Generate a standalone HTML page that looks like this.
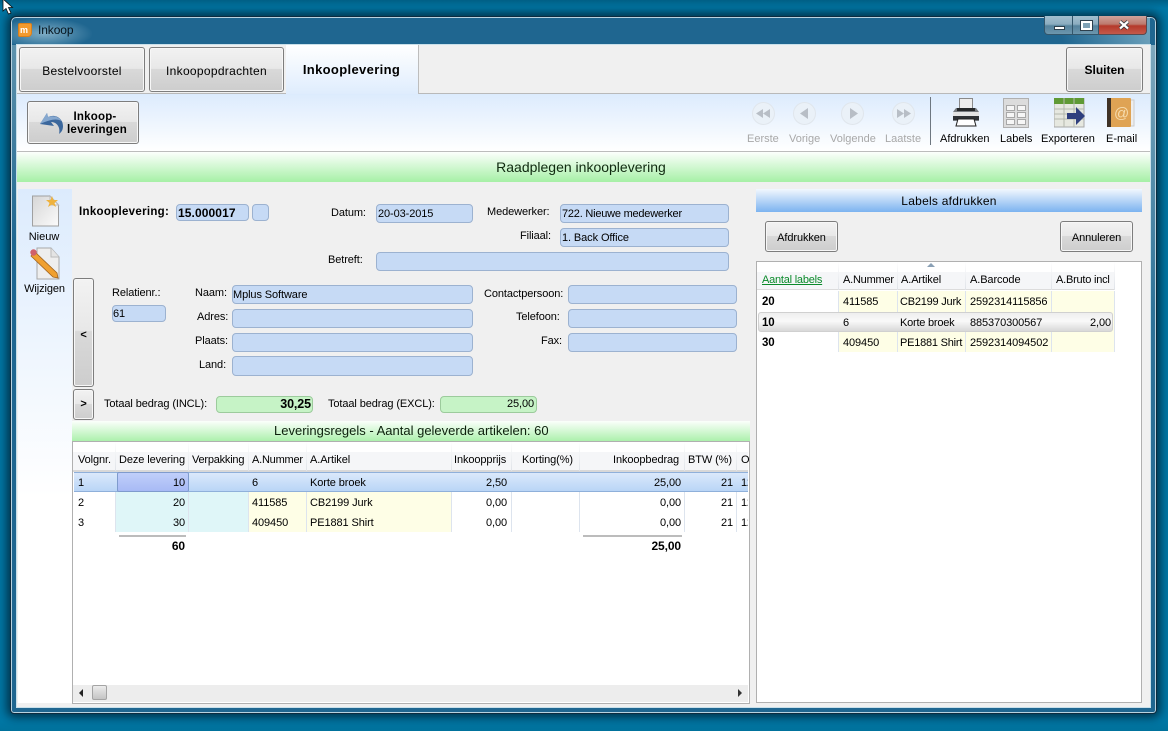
<!DOCTYPE html>
<html><head><meta charset="utf-8"><style>
html,body{margin:0;padding:0}
body{width:1168px;height:731px;overflow:hidden;position:relative;background:linear-gradient(#005f85 0,#0078a6 8px,#0078a6 720px,#00729c 731px);font-family:"Liberation Sans",sans-serif;font-size:11px;color:#000}
div,span,svg{position:absolute;box-sizing:border-box}
.t{white-space:nowrap;line-height:14px;height:14px;margin-top:1px;letter-spacing:-.1px}
.m0{margin-top:0}
.s{letter-spacing:-.22px}
.z{letter-spacing:0}
.r{text-align:right}.c{text-align:center}.b{font-weight:bold}
.btn{border:1px solid #7d7d7d;border-radius:3px;background:linear-gradient(#f2f2f2 0,#e8e8e8 48%,#d9d9d9 49%,#cdcdcd 100%);box-shadow:inset 0 0 0 1px #f7f7f7}
.f{background:#c6daf5;border:1px solid #9cb2d0;border-radius:4px}
.g{background:#c6f3c6;border:1px solid #9ccb9c;border-radius:4px}
.n{color:#a8a8a8}
.v{width:1px;background:#dde4ee}
.h{width:1px;background:linear-gradient(#fff,#dfe3e8)}
</style></head><body>
<!-- window -->
<div style="left:10px;top:16px;width:1147px;height:698px;background:#1f6690;border:1px solid #0c2c40;border-radius:6px 6px 4px 4px;box-shadow:0 0 10px 3px rgba(0,20,35,.75),inset 0 0 0 1px #b9d2df"></div>
<div style="left:12px;top:18px;width:80px;height:26px;background:radial-gradient(ellipse at 40% 60%,rgba(150,190,210,.8),rgba(31,102,144,0) 72%)"></div>
<div style="left:1000px;top:18px;width:150px;height:27px;background:linear-gradient(250deg,rgba(140,185,205,.75),rgba(31,102,144,0) 60%)"></div>
<div style="left:1150px;top:45px;width:5px;height:660px;background:linear-gradient(#7ea8bd,#2f7399 40%,#1f6690)"></div>
<div style="left:12px;top:45px;width:4px;height:660px;background:linear-gradient(#5f93ad,#1f6690 30%)"></div>
<div style="left:16px;top:44px;width:1135px;height:664px;border:1px solid #c9e0ea"></div>
<!-- title -->
<div style="left:18px;top:23px;width:14px;height:14px;background:#f29a2e;border-radius:2px 2px 4px 2px;border:1px solid #d9801c"></div>
<div class="t b m0" style="left:20px;top:23px;color:#fff;font-size:9px">m</div>
<div class="t m0" style="left:38px;top:23px;font-size:12px;color:#06141d">Inkoop</div>
<!-- caption buttons -->
<div style="left:1044px;top:16px;width:29px;height:19px;background:linear-gradient(#a2bfcf,#8cadc0 45%,#55829c 55%,#6d97ae);border:1px solid #33566b;border-top:0;border-radius:0 0 0 4px"></div>
<div style="left:1073px;top:16px;width:26px;height:19px;background:linear-gradient(#a2bfcf,#8cadc0 45%,#55829c 55%,#6d97ae);border:1px solid #33566b;border-top:0;border-left:0"></div>
<div style="left:1099px;top:16px;width:48px;height:19px;background:linear-gradient(#cfa49c,#bd7a6e 45%,#b53a2b 55%,#c45a4b);border:1px solid #5a4a4f;border-top:0;border-left:0;border-radius:0 0 4px 0"></div>
<div style="left:1054px;top:26px;width:11px;height:4px;background:#fff;border:1px solid #2d3f4c"></div>
<div style="left:1081px;top:21px;width:11px;height:9px;background:#7fa1b5;border:2px solid #fff;outline:1px solid #2d3f4c"></div>
<svg style="left:1118px;top:20px" width="12" height="10"><path d="M2 1.500L10 8.500M10 1.500L2 8.500" stroke="#28343c" stroke-width="3.800"/><path d="M2 1.500L10 8.500M10 1.500L2 8.500" stroke="#fff" stroke-width="2.200"/></svg>
<!-- client -->
<div style="left:17px;top:45px;width:1133px;height:662px;background:#f0f0f0"></div>
<!-- tabs -->
<div style="left:17px;top:93px;width:1133px;height:1px;background:#b9b9b9"></div>
<div style="left:19px;top:47px;width:126px;height:45px" class="btn"></div>
<div class="t c" style="left:19px;top:63px;width:126px;font-size:12px;letter-spacing:.3px">Bestelvoorstel</div>
<div style="left:149px;top:47px;width:135px;height:45px" class="btn"></div>
<div class="t c" style="left:149px;top:63px;width:135px;font-size:12px;letter-spacing:.3px">Inkoopopdrachten</div>
<div style="left:286px;top:45px;width:133px;height:50px;background:linear-gradient(#fff,#deecfd);border-right:1px solid #bdbdbd"></div>
<div class="t c b" style="left:285px;top:62px;width:133px;font-size:13px;letter-spacing:.35px">Inkooplevering</div>
<div style="left:1066px;top:47px;width:77px;height:45px" class="btn"></div>
<div class="t c b m0" style="left:1066px;top:63px;width:77px;font-size:12px;letter-spacing:0">Sluiten</div>
<!-- toolbar -->
<div style="left:17px;top:94px;width:1133px;height:57px;background:linear-gradient(#dcebfd,#fff)"></div>
<div style="left:17px;top:151px;width:1133px;height:1px;background:#bcbcbc"></div>
<div style="left:27px;top:101px;width:112px;height:43px" class="btn"></div>
<svg style="left:38px;top:111px" width="26" height="24" viewBox="0 0 26 24"><path d="M2 13L9 2L10 6C18 2.500 25 8 25 15C25 19 23.500 21 21 23C22.500 17 19.500 11 13 11L16 15Z" fill="#3b679c"/><path d="M2 13L9 2L10 6C16 4 21 6 23.500 10C19 7.500 13 8 2 13Z" fill="#86a8cf"/></svg>
<div class="t c b m0" style="left:62px;top:110px;width:66px;font-size:11.5px;letter-spacing:.2px">Inkoop-</div>
<div class="t c b m0" style="left:61px;top:123px;width:72px;font-size:11.5px;letter-spacing:.25px">leveringen</div>
<!-- nav circles -->
<div style="left:752px;top:102px;width:23px;height:23px;border-radius:50%;background:#eaf1f8;border:1px solid #e0e6ec"></div>
<div style="left:793px;top:102px;width:23px;height:23px;border-radius:50%;background:#eaf1f8;border:1px solid #e0e6ec"></div>
<div style="left:841px;top:102px;width:23px;height:23px;border-radius:50%;background:#eaf1f8;border:1px solid #e0e6ec"></div>
<div style="left:892px;top:102px;width:23px;height:23px;border-radius:50%;background:#eaf1f8;border:1px solid #e0e6ec"></div>
<svg style="left:752px;top:102px" width="170" height="23"><g fill="#b8bec6"><path d="M4 11.500L11 7V16ZM11 11.500L18 7V16Z"/><path d="M48 11.500L56 6V17Z"/><path d="M98 6L106 11.500L98 17Z"/><path d="M145 7L152 11.500L145 16ZM152 7L159 11.500L152 16Z"/></g></svg>
<div class="t n z" style="left:747px;top:131px">Eerste</div>
<div class="t n z" style="left:789px;top:131px">Vorige</div>
<div class="t n z" style="left:830px;top:131px">Volgende</div>
<div class="t n z" style="left:885px;top:131px">Laatste</div>
<div style="left:930px;top:97px;width:1px;height:48px;background:#6e7780"></div>
<!-- printer -->
<svg style="left:952px;top:98px" width="28" height="30" viewBox="0 0 28 30"><rect x="7.500" y=".5" width="13" height="10" fill="#ededed" stroke="#8a8a8a"/><path d="M4 10H24L27 14V23H1V14Z" fill="#777b80"/><rect x="5" y="10" width="18" height="3" fill="#26282a"/><rect x="1" y="14" width="26" height="4" fill="#e4e4e4"/><rect x="1" y="18" width="26" height="4" fill="#2f3236"/><path d="M6 21H22L24 28H4Z" fill="#fff" stroke="#222"/></svg>
<!-- labels -->
<svg style="left:1003px;top:98px" width="26" height="30" viewBox="0 0 26 30"><rect x=".5" y=".5" width="25" height="29" fill="#dcdcdc" stroke="#b0b0b0"/><g fill="#f6f6f6" stroke="#a8a8a8"><rect x="3.500" y="7.500" width="8" height="5"/><rect x="14.500" y="7.500" width="8" height="5"/><rect x="3.500" y="14.500" width="8" height="5"/><rect x="14.500" y="14.500" width="8" height="5"/><rect x="3.500" y="21.500" width="8" height="5"/><rect x="14.500" y="21.500" width="8" height="5"/></g></svg>
<!-- export -->
<svg style="left:1054px;top:98px" width="31" height="30" viewBox="0 0 31 30"><rect x="0" y="0" width="30" height="29" fill="#e6e8e0" stroke="#a8a8a8"/><rect x="0" y="0" width="30" height="6" fill="#5f9a35"/><path d="M0 11H30M0 16H30M0 21H30M10 6V29M20 6V29M10 0V6M20 0V6" stroke="#b4b8ae" fill="none"/><path d="M13 15H22V9L31 18L22 27V21H13Z" fill="#2f3f7e"/></svg>
<!-- email -->
<svg style="left:1107px;top:98px" width="28" height="30" viewBox="0 0 28 30"><rect x="23" y="2" width="4" height="26" fill="#eee" stroke="#ccc"/><rect x="0" y="0" width="24" height="29" rx="1" fill="#dfa354"/><rect x="0" y="0" width="4" height="29" fill="#3f3226"/><text x="7" y="20" font-size="15" fill="#f6dcae" font-family="Liberation Sans">@</text></svg>
<div class="t z" style="left:940px;top:131px">Afdrukken</div>
<div class="t z" style="left:1000px;top:131px">Labels</div>
<div class="t z" style="left:1041px;top:131px">Exporteren</div>
<div class="t z" style="left:1106px;top:131px">E-mail</div>
<!-- green header -->
<div style="left:17px;top:152px;width:1133px;height:30px;background:linear-gradient(#fcfffc,#a6f0a6)"></div>
<div class="t c m0 z" style="left:17px;top:160px;width:1128px;font-size:14px;line-height:15px;color:#102a10">Raadplegen inkooplevering</div>
<!-- side -->
<div style="left:18px;top:189px;width:54px;height:514px;background:linear-gradient(#dcebfd,#fff 60%)"></div>
<svg style="left:32px;top:195px" width="28" height="32" viewBox="0 0 28 32"><defs><linearGradient id="p" x1="0" y1="0" x2="1" y2="1"><stop offset="0" stop-color="#d6d6d6"/><stop offset="1" stop-color="#fbfbfb"/></linearGradient></defs><path d="M.5 1H18L26.500 10V31H.5Z" fill="url(#p)" stroke="#a0a0a0"/><path d="M18 1V10H26.500Z" fill="#f2f2f2" stroke="#bbb"/><path d="M20 1L21.500 5H26L22.500 8L24 12L20 9.500L16 12L17.500 8L14 5H18.500Z" fill="#eeb23e"/></svg>
<div class="t c z" style="left:18px;top:229px;width:52px">Nieuw</div>
<svg style="left:29px;top:247px" width="32" height="33" viewBox="0 0 32 33"><path d="M8 1H22L30 10V32H8Z" fill="#eeeeee" stroke="#a8a8a8"/><path d="M22 1V10H30" fill="#e4e4e4" stroke="#bbb"/><path d="M6 5L28 26L29 31L24 30L2 9Z" fill="#f0a030" stroke="#a06420" stroke-width=".8"/><circle cx="4.500" cy="5.500" r="3.200" fill="#d0606a"/></svg>
<div class="t c" style="left:18px;top:281px;width:53px">Wijzigen</div>
<!-- nav buttons -->
<div style="left:73px;top:278px;width:21px;height:109px" class="btn"></div>
<div class="t c b" style="left:73px;top:327px;width:21px">&lt;</div>
<div style="left:73px;top:389px;width:21px;height:31px" class="btn"></div>
<div class="t c b m0" style="left:73px;top:397px;width:21px">&gt;</div>
<!-- form -->
<div class="t b" style="left:79px;top:204px;font-size:11.5px;letter-spacing:.3px">Inkooplevering:</div>
<div class="f" style="left:176px;top:204px;width:73px;height:17px"></div>
<div class="t b" style="left:178px;top:205px;font-size:12px;letter-spacing:.1px">15.000017</div>
<div class="f" style="left:252px;top:204px;width:17px;height:17px"></div>
<div class="t" style="left:331px;top:204px;margin-top:2px">Datum:</div>
<div class="f" style="left:376px;top:204px;width:97px;height:19px"></div>
<div class="t" style="left:378px;top:206px">20-03-2015</div>
<div class="t" style="left:487px;top:204px">Medewerker:</div>
<div class="f" style="left:560px;top:204px;width:169px;height:19px"></div>
<div class="t s" style="left:562px;top:206px">722. Nieuwe medewerker</div>
<div class="t m0" style="left:520px;top:229px">Filiaal:</div>
<div class="f" style="left:560px;top:228px;width:169px;height:19px"></div>
<div class="t" style="left:562px;top:230px">1. Back Office</div>
<div class="t" style="left:328px;top:252px">Betreft:</div>
<div class="f" style="left:376px;top:252px;width:353px;height:19px"></div>
<div class="t m0" style="left:112px;top:286px">Relatienr.:</div>
<div class="f" style="left:112px;top:305px;width:54px;height:17px"></div>
<div class="t" style="left:113px;top:306px">61</div>
<div class="t m0" style="left:195px;top:286px">Naam:</div>
<div class="f" style="left:232px;top:285px;width:241px;height:19px"></div>
<div class="t" style="left:233px;top:287px">Mplus Software</div>
<div class="t" style="left:197px;top:309px">Adres:</div>
<div class="f" style="left:232px;top:309px;width:241px;height:19px"></div>
<div class="t" style="left:195px;top:333px">Plaats:</div>
<div class="f" style="left:232px;top:333px;width:241px;height:19px"></div>
<div class="t" style="left:199px;top:357px">Land:</div>
<div class="f" style="left:232px;top:356px;width:241px;height:20px"></div>
<div class="t" style="left:484px;top:286px">Contactpersoon:</div>
<div class="f" style="left:568px;top:285px;width:169px;height:19px"></div>
<div class="t" style="left:516px;top:309px">Telefoon:</div>
<div class="f" style="left:568px;top:309px;width:169px;height:19px"></div>
<div class="t" style="left:541px;top:333px">Fax:</div>
<div class="f" style="left:568px;top:333px;width:169px;height:19px"></div>
<div class="t" style="left:104px;top:396px">Totaal bedrag (INCL):</div>
<div class="g" style="left:216px;top:396px;width:97px;height:17px"></div>
<div class="t r b m0" style="left:216px;top:397px;width:95px;font-size:12.5px">30,25</div>
<div class="t" style="left:328px;top:396px">Totaal bedrag (EXCL):</div>
<div class="g" style="left:440px;top:396px;width:97px;height:17px"></div>
<div class="t r m0" style="left:440px;top:397px;width:94px">25,00</div>
<!-- left grid -->
<div style="left:72px;top:421px;width:678px;height:21px;background:linear-gradient(#fbfffb,#a8f0a8)"></div>
<div class="t m0 z" style="left:274px;top:424px;font-size:13px;color:#0c200c">Leveringsregels - Aantal geleverde artikelen: 60</div>
<div style="left:72px;top:441px;width:678px;height:263px;background:#fff;border:1px solid #b0b0b0"></div>
<div style="left:73px;top:452px;width:675px;height:19px;background:#f5f6f8"></div>
<div style="left:73px;top:470px;width:675px;height:2px;background:#d8d8d8"></div>
<div class="h" style="left:115px;top:442px;height:29px"></div><div class="h" style="left:188px;top:442px;height:29px"></div><div class="h" style="left:248px;top:442px;height:29px"></div><div class="h" style="left:306px;top:442px;height:29px"></div><div class="h" style="left:451px;top:442px;height:29px"></div><div class="h" style="left:511px;top:442px;height:29px"></div><div class="h" style="left:579px;top:442px;height:29px"></div><div class="h" style="left:684px;top:442px;height:29px"></div><div class="h" style="left:736px;top:442px;height:29px"></div>
<div class="t" style="left:78px;top:452px">Volgnr.</div>
<div class="t" style="left:119px;top:452px">Deze levering</div>
<div class="t s" style="left:192px;top:452px">Verpakking</div>
<div class="t s" style="left:252px;top:452px">A.Nummer</div>
<div class="t" style="left:310px;top:452px">A.Artikel</div>
<div class="t" style="left:454px;top:452px">Inkoopprijs</div>
<div class="t" style="left:522px;top:452px">Korting(%)</div>
<div class="t" style="left:613px;top:452px">Inkoopbedrag</div>
<div class="t" style="left:688px;top:452px">BTW (%)</div>
<div class="t" style="left:741px;top:452px">O</div>
<!-- row bg -->
<div style="left:116px;top:492px;width:132px;height:40px;background:#dff6f8"></div>
<div style="left:249px;top:492px;width:202px;height:40px;background:#fefee6"></div>
<div class="v" style="left:115px;top:492px;height:40px"></div><div class="v" style="left:188px;top:492px;height:40px"></div><div class="v" style="left:248px;top:492px;height:40px"></div><div class="v" style="left:306px;top:492px;height:40px"></div><div class="v" style="left:451px;top:492px;height:40px"></div><div class="v" style="left:511px;top:492px;height:40px"></div><div class="v" style="left:579px;top:492px;height:40px"></div><div class="v" style="left:684px;top:492px;height:40px"></div><div class="v" style="left:736px;top:492px;height:40px"></div>
<div style="left:74px;top:472px;width:674px;height:20px;background:linear-gradient(#dbe9fb,#b9d5f6);border-top:1px solid #8fb0da;border-bottom:1px solid #8fb0da"></div>
<div style="left:117px;top:472px;width:72px;height:20px;background:linear-gradient(#c0cffa,#a8baf5);border:1px solid #7f9bcd;border-radius:2px"></div>
<div class="t" style="left:78px;top:475px">1</div><div class="t r" style="left:116px;top:475px;width:69px">10</div><div class="t" style="left:252px;top:475px">6</div><div class="t" style="left:310px;top:475px">Korte broek</div><div class="t r" style="left:451px;top:475px;width:56px">2,50</div><div class="t r" style="left:580px;top:475px;width:101px">25,00</div><div class="t r" style="left:684px;top:475px;width:49px">21</div><div class="t" style="left:741px;top:475px;width:7px;overflow:hidden">12</div>
<div class="t" style="left:78px;top:495px">2</div><div class="t r" style="left:116px;top:495px;width:69px">20</div><div class="t" style="left:252px;top:495px">411585</div><div class="t" style="left:310px;top:495px">CB2199 Jurk</div><div class="t r" style="left:451px;top:495px;width:56px">0,00</div><div class="t r" style="left:580px;top:495px;width:101px">0,00</div><div class="t r" style="left:684px;top:495px;width:49px">21</div><div class="t" style="left:741px;top:495px;width:7px;overflow:hidden">12</div>
<div class="t" style="left:78px;top:515px">3</div><div class="t r" style="left:116px;top:515px;width:69px">30</div><div class="t" style="left:252px;top:515px">409450</div><div class="t" style="left:310px;top:515px">PE1881 Shirt</div><div class="t r" style="left:451px;top:515px;width:56px">0,00</div><div class="t r" style="left:580px;top:515px;width:101px">0,00</div><div class="t r" style="left:684px;top:515px;width:49px">21</div><div class="t" style="left:741px;top:515px;width:7px;overflow:hidden">12</div>
<div style="left:119px;top:535px;width:67px;height:2px;background:#bcbcbc"></div>
<div style="left:583px;top:535px;width:99px;height:2px;background:#bcbcbc"></div>
<div class="t r b" style="left:116px;top:538px;width:69px;font-size:12px">60</div>
<div class="t r b" style="left:580px;top:538px;width:101px;font-size:12px">25,00</div>
<!-- scrollbar -->
<div style="left:73px;top:685px;width:675px;height:17px;background:#ededed"></div>
<div style="left:92px;top:685px;width:15px;height:15px;background:linear-gradient(#ececec,#c4c4c4);border:1px solid #a4a4a4;border-radius:2px"></div>
<svg style="left:78px;top:688px" width="6" height="10"><path d="M5 1V9L1 5Z" fill="#222"/></svg>
<svg style="left:737px;top:688px" width="6" height="10"><path d="M1 1V9L5 5Z" fill="#333"/></svg>
<!-- right panel -->
<div style="left:756px;top:189px;width:386px;height:23px;background:linear-gradient(#f2f7fe,#7cb3f0)"></div>
<div class="t c m0" style="left:756px;top:194px;width:386px;font-size:12px;letter-spacing:.25px">Labels afdrukken</div>
<div style="left:765px;top:221px;width:73px;height:31px" class="btn"></div>
<div class="t c" style="left:765px;top:230px;width:73px">Afdrukken</div>
<div style="left:1060px;top:221px;width:73px;height:31px" class="btn"></div>
<div class="t c" style="left:1060px;top:230px;width:73px">Annuleren</div>
<div style="left:756px;top:261px;width:386px;height:442px;background:#fff;border:1px solid #b0b0b0"></div>
<div style="left:757px;top:272px;width:358px;height:18px;background:#f5f6f8"></div>
<div style="left:757px;top:289px;width:358px;height:1px;background:#dcdcdc"></div>
<div class="h" style="left:838px;top:262px;height:28px"></div><div class="h" style="left:897px;top:262px;height:28px"></div><div class="h" style="left:965px;top:262px;height:28px"></div><div class="h" style="left:1051px;top:262px;height:28px"></div><div class="h" style="left:1114px;top:262px;height:28px"></div>
<svg style="left:927px;top:263px" width="8" height="5"><path d="M0 4L4 0L8 4Z" fill="#8aa0b5"/></svg>
<div class="t s" style="left:762px;top:272px;color:#0a8a2a;text-decoration:underline">Aantal labels</div>
<div class="t s" style="left:843px;top:272px">A.Nummer</div>
<div class="t" style="left:901px;top:272px">A.Artikel</div>
<div class="t" style="left:970px;top:272px">A.Barcode</div>
<div class="t s" style="left:1056px;top:272px">A.Bruto incl</div>
<div style="left:839px;top:291px;width:275px;height:61px;background:#fefee6"></div>
<div class="v" style="left:838px;top:291px;height:61px"></div><div class="v" style="left:897px;top:291px;height:61px"></div><div class="v" style="left:965px;top:291px;height:61px"></div><div class="v" style="left:1051px;top:291px;height:61px"></div><div class="v" style="left:1114px;top:291px;height:61px"></div>
<div style="left:758px;top:312px;width:355px;height:20px;background:linear-gradient(#eeeeee,#f9f9f9 45%,#d8d8d8);border:1px solid #d0d0d0;border-radius:3px"></div>
<div class="t b m0" style="left:762px;top:295px;font-size:11.5px">20</div><div class="t m0" style="left:843px;top:295px">411585</div><div class="t m0 s" style="left:900px;top:295px">CB2199 Jurk</div><div class="t m0" style="left:970px;top:295px">2592314115856</div>
<div class="t b" style="left:762px;top:315px;font-size:11.5px">10</div><div class="t" style="left:843px;top:315px">6</div><div class="t s" style="left:900px;top:315px">Korte broek</div><div class="t" style="left:970px;top:315px">885370300567</div><div class="t r" style="left:1052px;top:315px;width:59px">2,00</div>
<div class="t b" style="left:762px;top:335px;font-size:11.5px">30</div><div class="t" style="left:843px;top:335px">409450</div><div class="t s" style="left:900px;top:335px">PE1881 Shirt</div><div class="t" style="left:970px;top:335px">2592314094502</div>
<!-- cursor -->
<svg style="left:2px;top:0" width="13" height="16"><path d="M1 -1V11L4 8.500L6.500 14L9 13L6.500 7.500H10.500Z" fill="#fff" stroke="#111" stroke-width=".8"/></svg>
</body></html>
